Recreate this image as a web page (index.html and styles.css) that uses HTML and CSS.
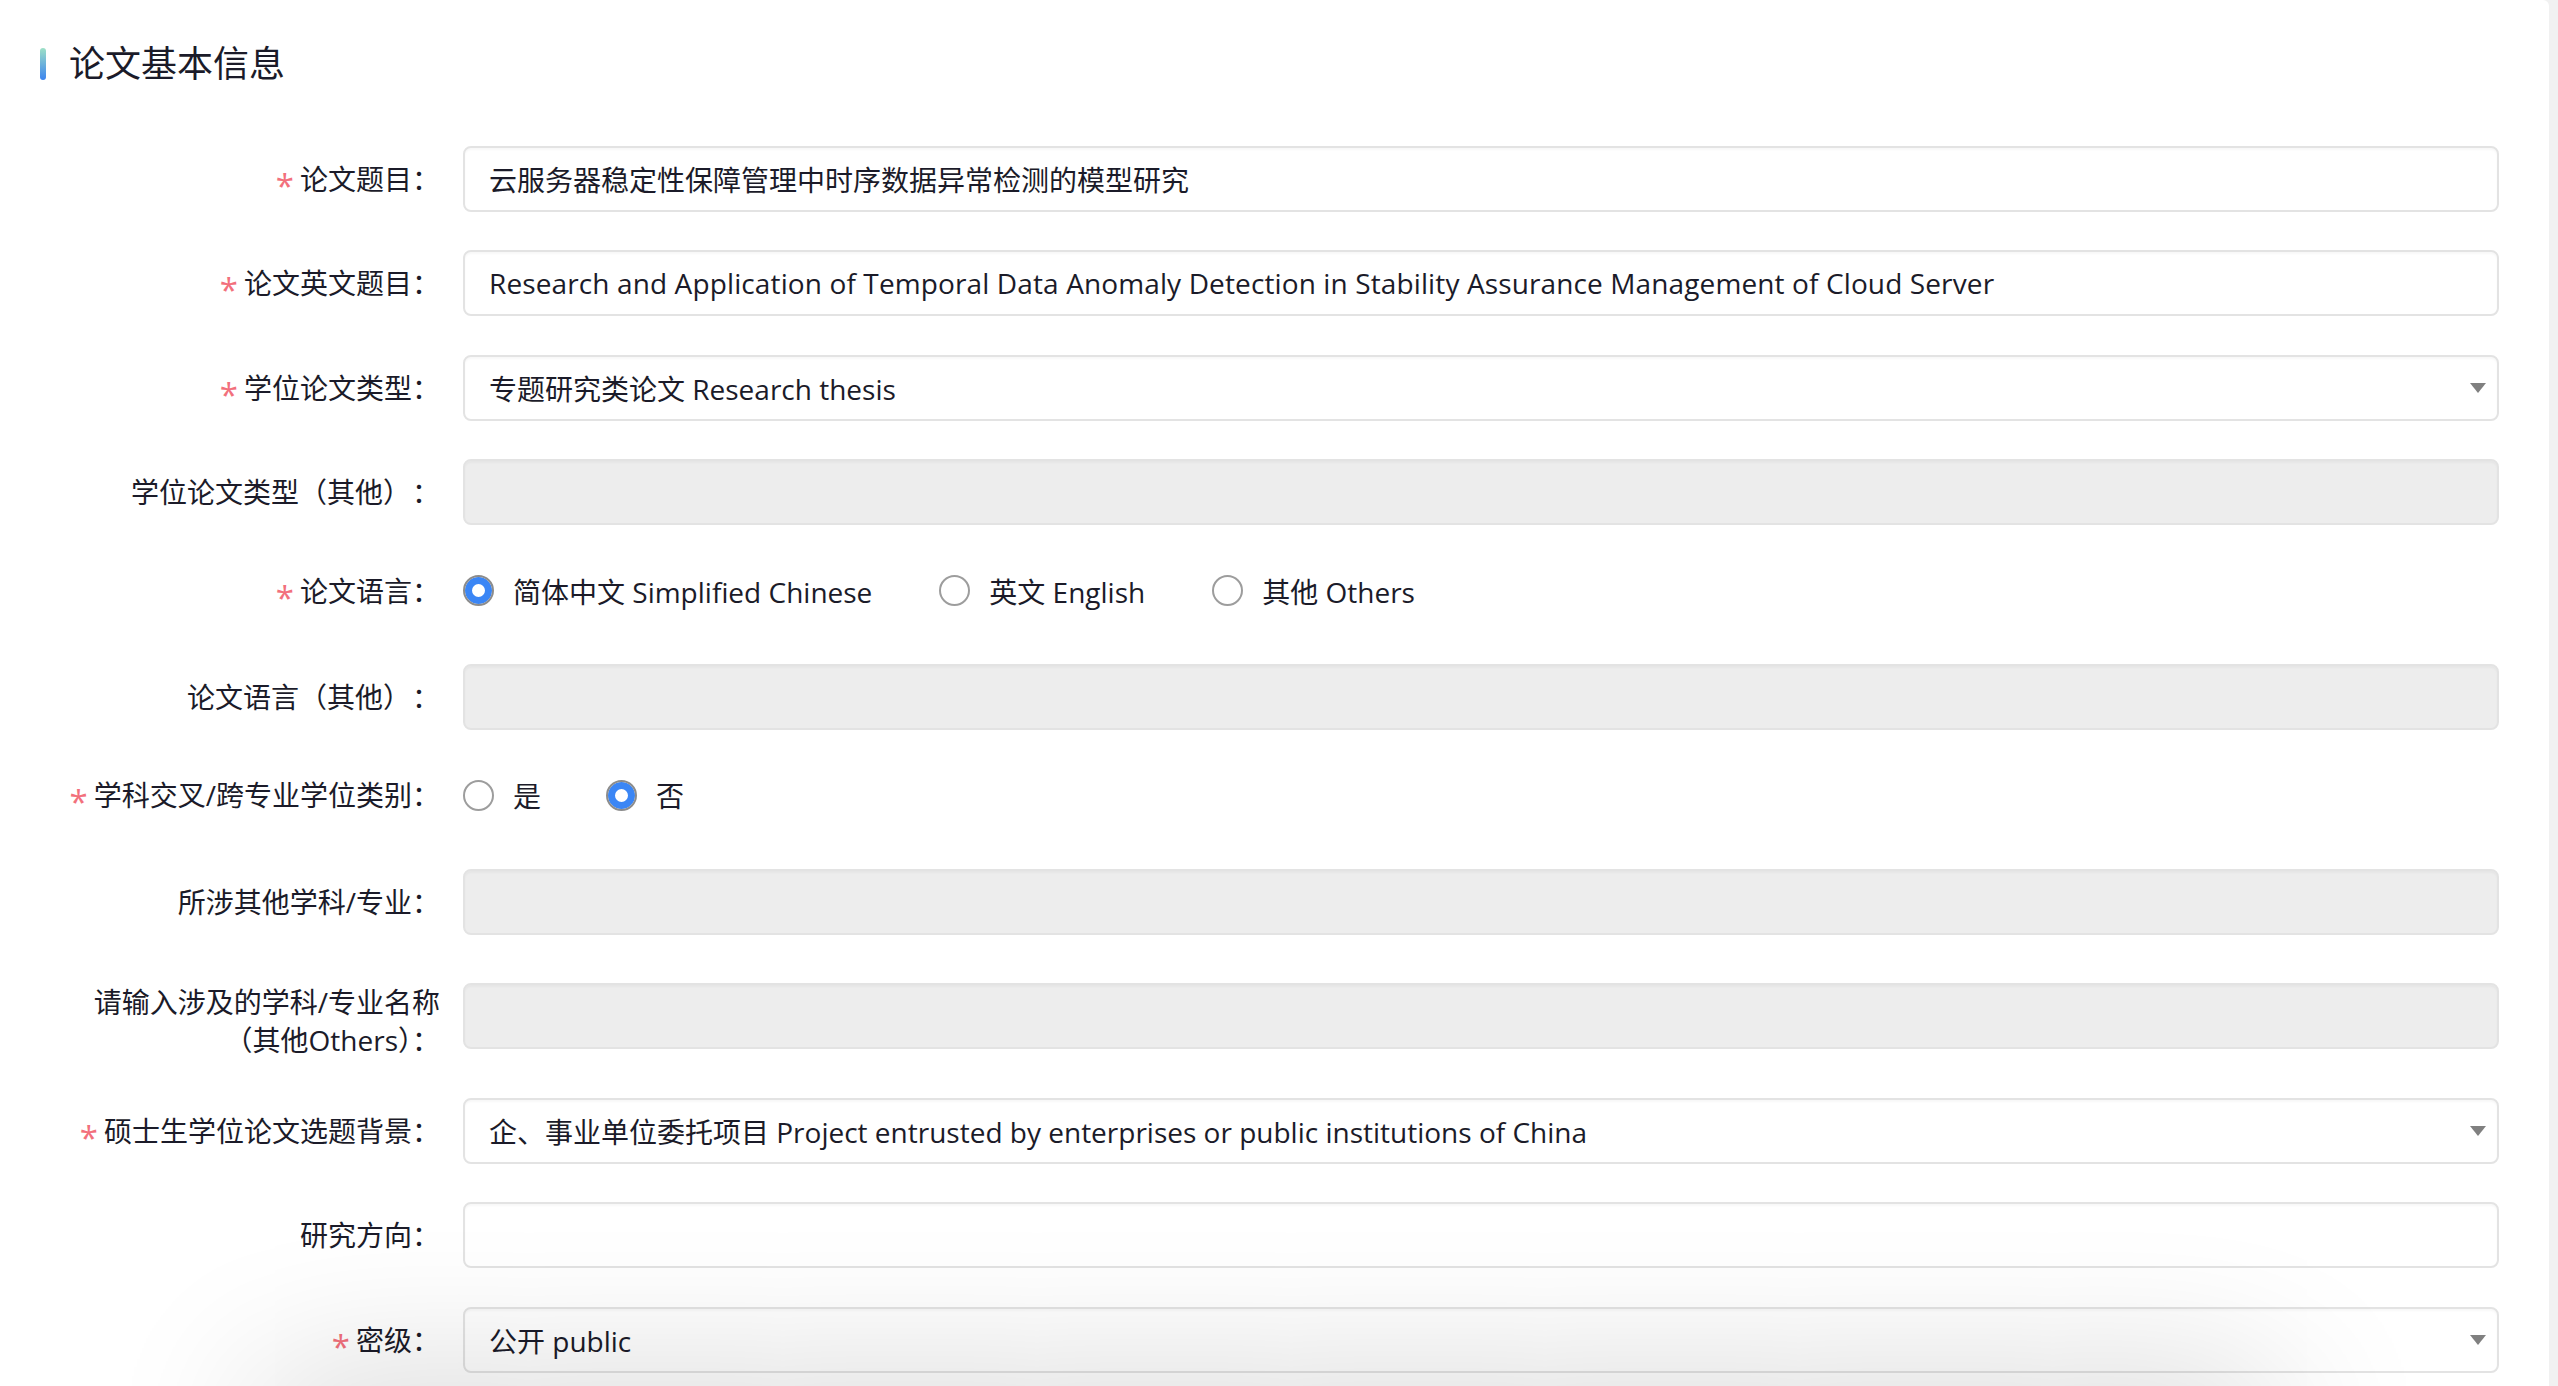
FILE: index.html
```html
<!DOCTYPE html>
<html lang="zh-CN">
<head>
<meta charset="utf-8">
<title>论文基本信息</title>
<link rel="stylesheet" href="styles.css">
</head>
<body>
<div class="page">
  <main class="main">
    <h2 class="section-title"><span class="bar"></span>论文基本信息</h2>
    <div class="form">
      <div class="row">
        <label class="label"><span class="req">*</span>论文题目：</label>
        <div class="control"><div class="input">云服务器稳定性保障管理中时序数据异常检测的模型研究</div></div>
      </div>
      <div class="row">
        <label class="label"><span class="req">*</span>论文英文题目：</label>
        <div class="control"><div class="input latin">Research and Application of Temporal Data Anomaly Detection in Stability Assurance Management of Cloud Server</div></div>
      </div>
      <div class="row">
        <label class="label"><span class="req">*</span>学位论文类型：</label>
        <div class="control"><div class="input select"><span class="value">专题研究类论文 Research thesis</span><svg class="caret" width="16" height="10" viewBox="0 0 16 10"><path d="M0 0H16L8 10Z" fill="#808080"/></svg></div></div>
      </div>
      <div class="row">
        <label class="label">学位论文类型（其他）<span class="colon">：</span></label>
        <div class="control"><div class="input disabled"></div></div>
      </div>
      <div class="row radio-row">
        <label class="label"><span class="req">*</span>论文语言：</label>
        <div class="control radios">
          <span class="opt"><span class="radio checked"></span>简体中文 Simplified Chinese</span>
          <span class="opt"><span class="radio"></span>英文 English</span>
          <span class="opt"><span class="radio"></span>其他 Others</span>
        </div>
      </div>
      <div class="row">
        <label class="label">论文语言（其他）<span class="colon">：</span></label>
        <div class="control"><div class="input disabled"></div></div>
      </div>
      <div class="row radio-row">
        <label class="label"><span class="req">*</span>学科交叉/跨专业学位类别：</label>
        <div class="control radios">
          <span class="opt short"><span class="radio"></span>是</span>
          <span class="opt short"><span class="radio checked"></span>否</span>
        </div>
      </div>
      <div class="row">
        <label class="label">所涉其他学科/专业：</label>
        <div class="control"><div class="input disabled"></div></div>
      </div>
      <div class="row">
        <label class="label two-line">请输入涉及的学科/专业名称<br>（其他Others）：</label>
        <div class="control"><div class="input disabled"></div></div>
      </div>
      <div class="row">
        <label class="label"><span class="req">*</span>硕士生学位论文选题背景：</label>
        <div class="control"><div class="input select"><span class="value">企、事业单位委托项目 Project entrusted by enterprises or public institutions of China</span><svg class="caret" width="16" height="10" viewBox="0 0 16 10"><path d="M0 0H16L8 10Z" fill="#808080"/></svg></div></div>
      </div>
      <div class="row">
        <label class="label">研究方向：</label>
        <div class="control"><div class="input"></div></div>
      </div>
      <div class="row">
        <label class="label"><span class="req">*</span>密级：</label>
        <div class="control"><div class="input select"><span class="value">公开 public</span><svg class="caret" width="16" height="10" viewBox="0 0 16 10"><path d="M0 0H16L8 10Z" fill="#808080"/></svg></div></div>
      </div>
    </div>
  </main>
  <div class="gutter"></div>
</div>
<div class="dock-shadow"></div>
</body>
</html>
```

FILE: styles.css
```css
html, body {
  margin: 0;
  padding: 0;
  height: 100%;
  overflow: hidden;
}
body {
  background: #f1f1f1;
  font-family: "Open Sans", "Noto Sans CJK SC", sans-serif;
  color: #1b1b29;
}
.page {
  display: flex;
  min-height: 100vh;
}
.main {
  flex: 1;
  background: #ffffff;
  border-top-right-radius: 6px;
  padding: 40px 50px 40px 40px;
}
.gutter {
  width: 9px;
  flex-shrink: 0;
}
.section-title {
  display: flex;
  align-items: center;
  margin: 0 0 58px 0;
  font-size: 36px;
  line-height: 48px;
  font-weight: 400;
  color: #1b1b29;
}
.bar {
  width: 6px;
  height: 32px;
  border-radius: 3px;
  margin-right: 23px;
  background: linear-gradient(180deg, #9de0c6 0%, #3c84ef 100%);
}
.form {
  display: flex;
  flex-direction: column;
}
.row {
  display: flex;
  align-items: center;
  margin-bottom: 38.4px;
}
.label {
  width: 400px;
  flex-shrink: 0;
  margin-right: 23px;
  text-align: right;
  font-size: 28px;
  line-height: 38px;
  padding: 5px 0;
  color: #1b1b29;
}
.label.two-line {
  padding: 10px 0 0 0;
}
.colon {
  margin-left: 15px;
}
.req {
  color: #f2707c;
  font-size: 33px;
  line-height: 20px;
  margin-right: 6px;
  vertical-align: -8px;
}
.control {
  flex: 1;
  min-width: 0;
}
.input {
  box-sizing: border-box;
  height: 66px;
  display: flex;
  align-items: center;
  border: 2px solid #e3e3e3;
  border-radius: 8px;
  padding: 0 24px;
  background: #ffffff;
  box-shadow: inset 0 2px 2px rgba(0, 0, 0, 0.03);
  font-size: 28px;
  color: #1b1b29;
  white-space: nowrap;
  overflow: hidden;
}
.input.latin {
  letter-spacing: 0.12px;
}
.input.disabled {
  background: #ededed;
}
.select {
  padding-right: 11px;
}
.select .value {
  flex: 1;
}
.caret {
  flex-shrink: 0;
}
.radio-row {
  height: 54px;
  margin-bottom: 46.5px;
}
.radios {
  display: flex;
  align-items: center;
  font-size: 28px;
}
.opt {
  display: flex;
  align-items: center;
  margin-right: 67px;
}
.opt.short {
  margin-right: 65px;
}
.radio {
  box-sizing: border-box;
  width: 31px;
  height: 31px;
  border-radius: 50%;
  border: 2px solid #9d9d9d;
  background: #ffffff;
  margin-right: 19px;
  flex-shrink: 0;
}
.radio.checked {
  border-color: #8c8c8c;
  box-shadow: inset 0 0 0 7px #3b86f5;
}
.dock-shadow {
  position: fixed;
  left: 260px;
  right: 280px;
  top: 100vh;
  height: 100px;
  background: #ffffff;
  box-shadow: 0 0 160px rgba(0, 0, 0, 0.2);
  z-index: 5;
}
```
